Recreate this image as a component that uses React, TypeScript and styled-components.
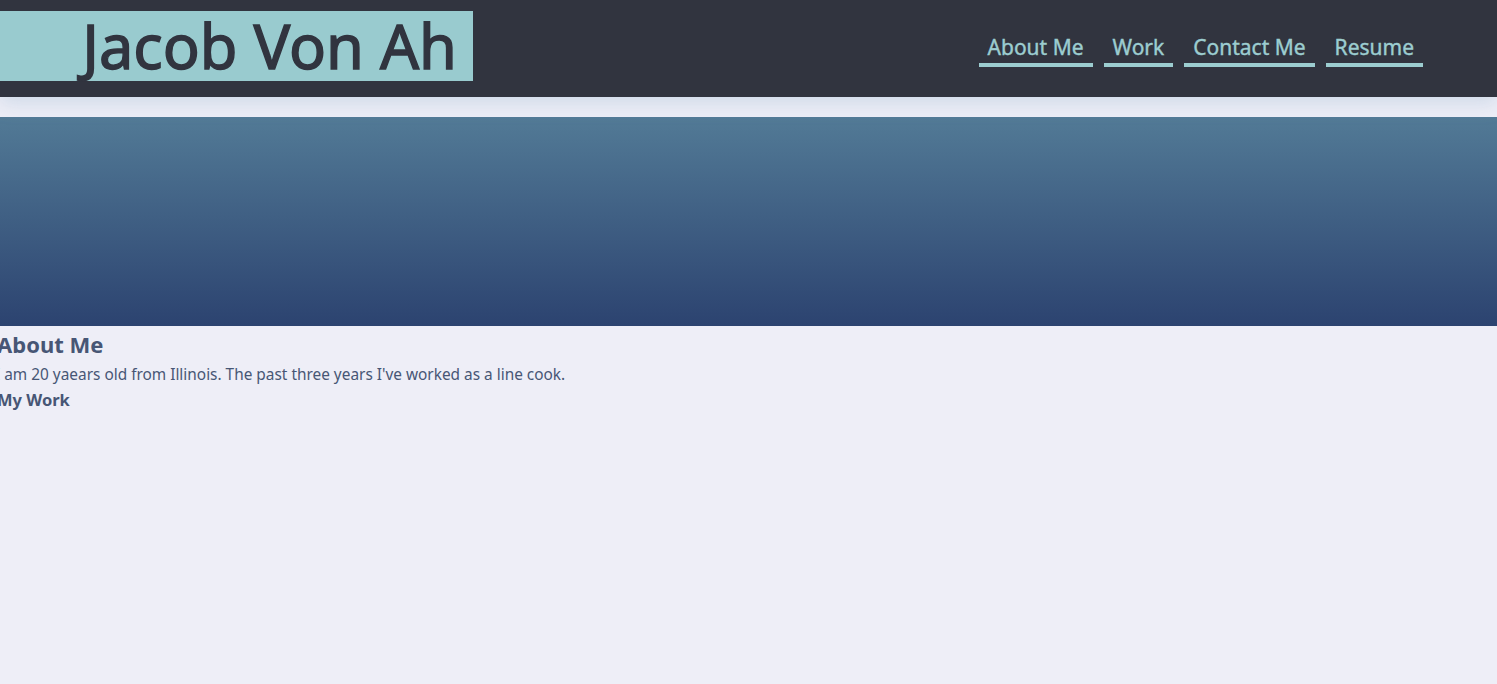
import React from "react";
import styled, { createGlobalStyle } from "styled-components";

const Global = createGlobalStyle`
  html, body { margin: 0; padding: 0; background: #eeeef7; }
  body { font-family: "Noto Sans", "DejaVu Sans", sans-serif; overflow: hidden; }
`;

const Header = styled.header`
  display: flex;
  align-items: flex-start;
  justify-content: space-between;
  height: 97px;
  background: #31343f;
  box-shadow: 0 6px 18px rgba(150, 180, 205, 0.35);
  position: relative;
  z-index: 1;
`;

const TitleBox = styled.h1`
  margin: 11px 0 0;
  width: 473px;
  height: 70px;
  box-sizing: border-box;
  background: #99cbcf;
  color: #31343f;
  font-size: 61.3px;
  font-weight: 400;
  -webkit-text-stroke: 1.4px #31343f;
  line-height: 68px;
  text-align: right;
  padding-right: 16px;
  white-space: nowrap;
`;

const Nav = styled.nav`
  display: flex;
  gap: 11px;
  margin: 31px 74px 0 0;
`;

const NavLink = styled.a`
  display: block;
  padding: 0 9px;
  color: #9ccdd0;
  font-size: 21px;
  -webkit-text-stroke: 0.4px #9ccdd0;
  line-height: 32px;
  border-bottom: 4px solid #9ccdd0;
  text-decoration: none;
`;

const Hero = styled.div`
  margin-top: 20px;
  height: 209px;
  background: linear-gradient(to bottom, #527a96, #2c4370);
`;

const Main = styled.main`
  margin-left: -3px;
  color: #475675;
`;

const H2 = styled.h2`
  margin: 5px 0 0;
  font-size: 22px;
  line-height: 26px;
  font-weight: 700;
`;

const P = styled.p`
  margin: 9px 0 0 -2px;
  font-size: 15.4px;
  line-height: 18px;
`;

const H3 = styled.h3`
  margin: 6px 0 0;
  font-size: 16.5px;
  line-height: 20px;
  font-weight: 700;
`;

export default function App() {
  return (
    <>
      <Global />
      <Header>
        <TitleBox>Jacob Von Ah</TitleBox>
        <Nav>
          <NavLink href="#about">About Me</NavLink>
          <NavLink href="#work">Work</NavLink>
          <NavLink href="#contact">Contact Me</NavLink>
          <NavLink href="#resume">Resume</NavLink>
        </Nav>
      </Header>
      <Hero />
      <Main>
        <H2>About Me</H2>
        <P>I am 20 yaears old from Illinois. The past three years I've worked as a line cook.</P>
        <H3>My Work</H3>
      </Main>
    </>
  );
}
